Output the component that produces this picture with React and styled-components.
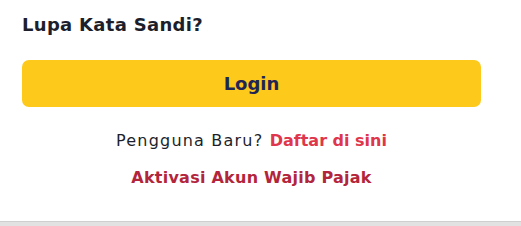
import styled, { createGlobalStyle } from "styled-components";

const GlobalStyle = createGlobalStyle`
  html, body {
    margin: 0;
    padding: 0;
    background: #ffffff;
  }
  body {
    font-family: "DejaVu Sans", "Noto Sans", sans-serif;
  }
`;

const Page = styled.div`
  width: 521px;
  height: 226px;
  display: flex;
  flex-direction: column;
  overflow: hidden;
`;

const Card = styled.div`
  flex: 1;
  background: #ffffff;
  padding: 13px 40px 0 22px;
  display: flex;
  flex-direction: column;
`;

const Title = styled.h3`
  margin: 0;
  font-size: 18px;
  font-weight: 700;
  letter-spacing: 0.3px;
  color: #1c1f2b;
  line-height: 24px;
`;

const LoginButton = styled.button`
  margin-top: 23px;
  height: 47px;
  width: 100%;
  border: none;
  border-radius: 7px;
  background: #fdc91b;
  color: #1f2656;
  font-family: inherit;
  font-size: 18px;
  font-weight: 700;
  cursor: pointer;
`;

const Line = styled.p`
  margin: ${(p) => p.$top}px 0 0;
  text-align: center;
  font-size: 16px;
  line-height: 20px;
  letter-spacing: 1.2px;
  color: #1c1f2b;
`;

const Link = styled.a`
  font-weight: 700;
  letter-spacing: ${(p) => p.$spacing || 0}px;
  color: ${(p) => p.$color};
  text-decoration: none;
  cursor: pointer;
`;

const Footer = styled.div`
  height: 4px;
  background: #e2e2e2;
  border-top: 1px solid #cfcfcf;
`;

const App = () => {
  return (
    <>
      <GlobalStyle />
      <Page>
        <Card>
          <Title>Lupa Kata Sandi?</Title>
          <LoginButton>Login</LoginButton>
          <Line $top={24}>
            Pengguna Baru? <Link $color="#e0364b">Daftar di sini</Link>
          </Line>
          <Line $top={17}>
            <Link $color="#b3253b" $spacing={0.25}>
              Aktivasi Akun Wajib Pajak
            </Link>
          </Line>
        </Card>
        <Footer />
      </Page>
    </>
  );
};

export default App;
